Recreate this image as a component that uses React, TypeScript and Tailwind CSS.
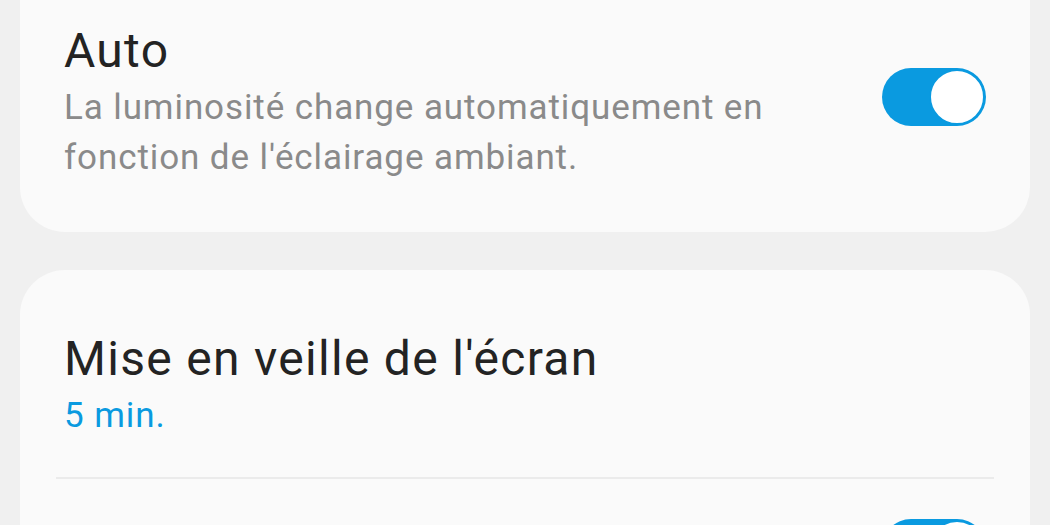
import React from 'react';

const Toggle: React.FC<{ on?: boolean }> = ({ on = true }) => (
  <div
    className={`relative w-[104px] h-[58px] rounded-full shrink-0 ${on ? 'bg-[#0a9ae0]' : 'bg-[#b0b0b0]'}`}
  >
    <span className="absolute right-[1px] top-[1px] w-[56px] h-[56px] rounded-full bg-white border-[2px] border-[#0a9ae0]" />
  </div>
);

export default function App() {
  return (
    <div
      className="w-[1050px] h-[525px] overflow-hidden bg-[#f0f0f0] px-[20px]"
      style={{ fontFamily: 'Roboto, "Noto Sans", sans-serif' }}
    >
      {/* Auto brightness card */}
      <div className="bg-[#fafafa] rounded-b-[45px] pl-[44px] pr-[44px] pt-[19px] pb-[49px] flex items-start justify-between">
        <div>
          <div className="text-[48px] leading-[64px] tracking-[1.3px] text-[#232323]">Auto</div>
          <div className="text-[35px] leading-[50px] tracking-[0.9px] text-[#8a8a8a]">
            La luminosité change automatiquement en
            <br />
            fonction de l'éclairage ambiant.
          </div>
        </div>
        <div className="mt-[49px]">
          <Toggle />
        </div>
      </div>

      {/* Screen timeout card */}
      <div className="mt-[38px] bg-[#fafafa] rounded-t-[45px] px-[36px]">
        <div className="pl-[8px] pt-[57px] pb-[36px]">
          <div className="text-[48px] leading-[64px] tracking-[1.3px] text-[#232323]">Mise en veille de l'écran</div>
          <div className="text-[35px] leading-[50px] tracking-[0.9px] text-[#0a9ae0]">5 min.</div>
        </div>
        <div className="h-[2px] bg-[#ebebeb]" />
        <div className="pr-[8px] pt-[40px] flex justify-end">
          <Toggle />
        </div>
      </div>
    </div>
  );
}
